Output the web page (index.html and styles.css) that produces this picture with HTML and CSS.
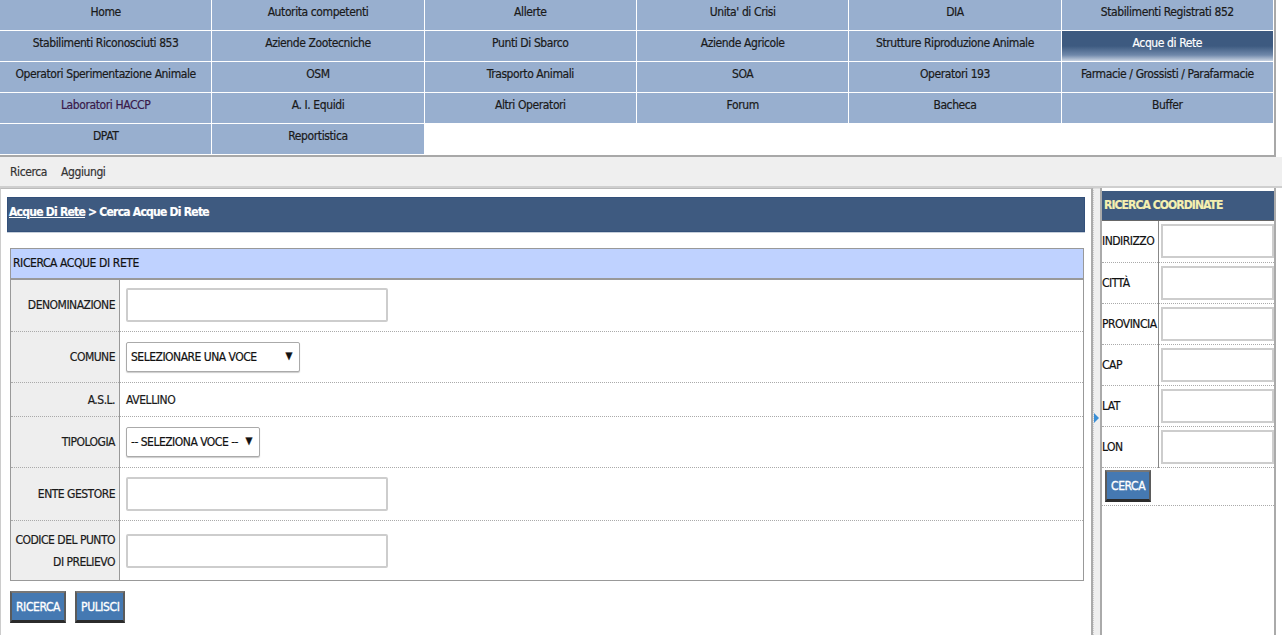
FILE: index.html
```html
<!DOCTYPE html>
<html lang="it">
<head>
<meta charset="utf-8">
<title>Acque di Rete - Ricerca</title>
<link rel="stylesheet" href="styles.css">
</head>
<body>
<div class="header">
  <nav class="menu">
    <a class="tab">Home</a>
    <a class="tab">Autorita competenti</a>
    <a class="tab">Allerte</a>
    <a class="tab">Unita' di Crisi</a>
    <a class="tab">DIA</a>
    <a class="tab">Stabilimenti Registrati 852</a>
    <a class="tab">Stabilimenti Riconosciuti 853</a>
    <a class="tab">Aziende Zootecniche</a>
    <a class="tab">Punti Di Sbarco</a>
    <a class="tab">Aziende Agricole</a>
    <a class="tab">Strutture Riproduzione Animale</a>
    <a class="tab active">Acque di Rete</a>
    <a class="tab">Operatori Sperimentazione Animale</a>
    <a class="tab">OSM</a>
    <a class="tab">Trasporto Animali</a>
    <a class="tab">SOA</a>
    <a class="tab">Operatori 193</a>
    <a class="tab">Farmacie / Grossisti / Parafarmacie</a>
    <a class="tab visited">Laboratori HACCP</a>
    <a class="tab">A. I. Equidi</a>
    <a class="tab">Altri Operatori</a>
    <a class="tab">Forum</a>
    <a class="tab">Bacheca</a>
    <a class="tab">Buffer</a>
    <a class="tab">DPAT</a>
    <a class="tab">Reportistica</a>
  </nav>
</div>
<div class="submenu">
  <a>Ricerca</a>
  <a>Aggiungi</a>
</div>
<div class="main">
  <section class="content">
    <div class="breadcrumb"><a class="crumb-link">Acque Di Rete</a> &gt; Cerca Acque Di Rete</div>
    <table class="form">
      <tr><th colspan="2" class="form-title">RICERCA ACQUE DI RETE</th></tr>
      <tr class="r-input">
        <td class="lbl">DENOMINAZIONE</td>
        <td class="val"><input type="text" class="txt"></td>
      </tr>
      <tr class="r-select">
        <td class="lbl">COMUNE</td>
        <td class="val"><span class="sel sel-wide">SELEZIONARE UNA VOCE<span class="arrow">▼</span></span></td>
      </tr>
      <tr class="r-text">
        <td class="lbl">A.S.L.</td>
        <td class="val">AVELLINO</td>
      </tr>
      <tr class="r-select">
        <td class="lbl">TIPOLOGIA</td>
        <td class="val"><span class="sel sel-narrow">-- SELEZIONA VOCE --<span class="arrow">▼</span></span></td>
      </tr>
      <tr class="r-input">
        <td class="lbl">ENTE GESTORE</td>
        <td class="val"><input type="text" class="txt"></td>
      </tr>
      <tr class="r-last">
        <td class="lbl">CODICE DEL PUNTO<br>DI PRELIEVO</td>
        <td class="val"><input type="text" class="txt"></td>
      </tr>
    </table>
    <div class="actions">
      <button class="btn">RICERCA</button>
      <button class="btn">PULISCI</button>
    </div>
  </section>
  <div class="splitter"><span class="split-arrow"></span></div>
  <aside class="side">
    <div class="side-title">RICERCA COORDINATE</div>
    <table class="coords">
      <tr><td class="clbl">INDIRIZZO</td><td class="cval"><input type="text" class="ctxt"></td></tr>
      <tr><td class="clbl">CITTÀ</td><td class="cval"><input type="text" class="ctxt"></td></tr>
      <tr><td class="clbl">PROVINCIA</td><td class="cval"><input type="text" class="ctxt"></td></tr>
      <tr><td class="clbl">CAP</td><td class="cval"><input type="text" class="ctxt"></td></tr>
      <tr><td class="clbl">LAT</td><td class="cval"><input type="text" class="ctxt"></td></tr>
      <tr><td class="clbl">LON</td><td class="cval"><input type="text" class="ctxt"></td></tr>
      <tr><td colspan="2" class="cbtn"><button class="btn">CERCA</button></td></tr>
    </table>
  </aside>
</div>
</body>
</html>
```
FILE: styles.css
```css
* { box-sizing: border-box; }
html, body { margin: 0; padding: 0; background: #fff; }
body {
  font-family: "DejaVu Sans", Verdana, sans-serif;
  font-stretch: condensed;
  font-size: 12px;
  color: #1a1a1a;
  height: 635px;
  overflow: hidden;
  -webkit-text-stroke: 0.2px;
}
.header {
  width: 1276px;
  border-right: 2px solid #a8a8a8;
  border-bottom: 2px solid #a8a8a8;
  background: #fff;
}
.menu {
  display: grid;
  grid-template-columns: repeat(6, 1fr);
  grid-auto-rows: 30px;
  gap: 1px;
  width: 1273px;
  padding-bottom: 1px;
}
.tab {
  display: flex;
  align-items: center;
  justify-content: center;
  background: #98afcf;
  color: #1a1a1a;
  font-size: 12px;
  letter-spacing: -0.4px;
  white-space: nowrap;
  padding-bottom: 6px;
}
.tab.visited { color: #3a1a4a; }
.tab.active {
  background: linear-gradient(to bottom, #3d5a80 0%, #3d5a80 50%, #6f88aa 80%, #c8d3e2 100%);
  color: #fff;
}
.submenu {
  display: flex;
  gap: 14px;
  height: 31px;
  padding: 8px 0 0 10px;
  background: #efefef;
  border-bottom: 2px solid #cfcfcf;
  color: #333;
  letter-spacing: -0.4px;
}
.main {
  display: flex;
  height: 447px;
  background: #fff;
}
.content {
  width: 1093px;
  background: #fff;
  border-top: 1px solid #bbb;
  border-left: 1px solid #ccc;
  border-right: 2px solid #aaa;
  padding: 8px 6px 0 6px;
}
.breadcrumb {
  height: 35px;
  background: #3e5a80;
  border: 1px solid #33507a;
  box-shadow: 0 1px 0 #c6cfdb;
  color: #fff;
  font-weight: bold;
  font-size: 12px;
  letter-spacing: -0.75px;
  padding: 7px 0 0 1px;
}
.crumb-link { text-decoration: underline; color: #fff; }
.form {
  margin: 16px 2px 0 3px;
  width: 1074px;
  border-collapse: collapse;
  border: 1px solid #999;
}
.form td, .form th { padding: 0; }
.form-title {
  height: 30px;
  background: #bfd2ff;
  text-align: left;
  font-weight: normal;
  color: #111;
  padding-left: 2px !important;
  border-bottom: 2px solid #999;
  letter-spacing: -0.4px;
  vertical-align: middle;
}
.lbl {
  width: 109px;
  background: #eeeeee;
  text-align: right;
  padding-right: 4px !important;
  border-right: 1px solid #999;
  border-bottom: 1px dotted #aaa;
  color: #1a1a1a;
  letter-spacing: -0.5px;
  vertical-align: middle;
  line-height: 22px;
}
.val {
  padding-left: 6px !important;
  border-bottom: 1px dotted #aaa;
  vertical-align: middle;
  letter-spacing: -0.4px;
}
.r-input td { height: 53px; }
.r-select td { height: 51px; }
.r-text td { height: 34px; }
.r-last td { height: 60px; border-bottom: 1px solid #999; }
.txt {
  width: 262px;
  height: 34px;
  border: 2px solid #cdcdcd;
  border-radius: 2px;
  background: #fff;
  display: block;
}
.sel {
  position: relative;
  display: block;
  height: 30px;
  border: 1px solid #aaa;
  border-radius: 2px;
  background: #fff;
  padding: 7px 0 0 4px;
  font-size: 12px;
  letter-spacing: -0.5px;
  color: #111;
  box-shadow: 0 1px 1px #ccc;
}
.sel-wide { width: 174px; }
.sel-narrow { width: 134px; }
.arrow {
  position: absolute;
  right: 7px;
  top: 7px;
  font-size: 10px;
  color: #111;
}
.actions {
  display: flex;
  gap: 9px;
  padding: 10px 0 0 3px;
}
.btn {
  font-family: inherit;
  font-stretch: condensed;
  font-size: 12px;
  letter-spacing: -0.4px;
  color: #fff;
  background: #4579b2;
  border: 2px solid #5b5b5b;
  border-bottom: 3px solid #2b2b2b;
  border-top-color: #777;
  height: 32px;
  padding: 0 4px;
  -webkit-text-stroke: 0.3px #fff;
}
.splitter {
  width: 7px;
  display: flex;
  align-items: center;
  justify-content: center;
  background: #efefef;
  border-top: 1px solid #ddd;
  border-left: 1px dotted #ccc;
}
.split-arrow {
  width: 0;
  height: 0;
  border-top: 5px solid transparent;
  border-bottom: 5px solid transparent;
  border-left: 5px solid #3a8fd6;
  margin: 0 2px 0 0;
  transform: translateY(6px);
}
.side {
  width: 176px;
  background: #fff;
  border-left: 2px solid #aaa;
  border-right: 2px solid #aaa;
  padding-top: 3px;
}
.side-title {
  height: 30px;
  background: #3e5a80;
  color: #f5f0b0;
  font-weight: bold;
  padding: 7px 0 0 2px;
  letter-spacing: -0.9px;
  border-bottom: 1px solid #666;
}
.coords {
  width: 100%;
  border-collapse: collapse;
}
.coords td { padding: 0; border-bottom: 1px dotted #aaa; height: 41px; }
.clbl {
  width: 57px;
  border-right: 1px solid #888;
  letter-spacing: -0.5px;
  color: #111;
  vertical-align: middle;
}
.cval { padding-left: 2px !important; vertical-align: middle; }
.ctxt {
  width: 113px;
  height: 34px;
  border: 2px solid #cdcdcd;
  display: block;
}
.cbtn { height: 38px !important; padding: 0 0 0 3px !important; }
.cbtn .btn { height: 32px; }
```
